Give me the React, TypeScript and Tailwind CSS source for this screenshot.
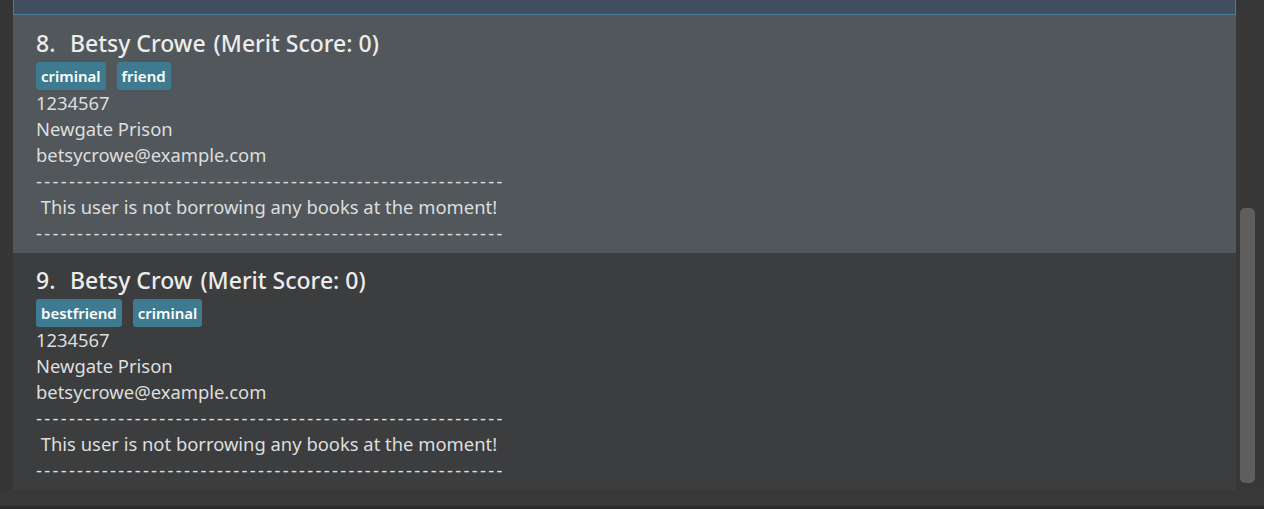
import React from "react";

const DASHES = "-".repeat(57);

type Person = { idx: number; name: string; tags: string[]; bg: string; pad: string };

const people: Person[] = [
  { idx: 8, name: "Betsy Crowe", tags: ["criminal", "friend"], bg: "bg-[#51575a]", pad: "pt-[14px] pb-[7px]" },
  { idx: 9, name: "Betsy Crow", tags: ["bestfriend", "criminal"], bg: "bg-[#3c3d3f]", pad: "pt-[13px] pb-[8px]" },
];

function Card({ p }: { p: Person }) {
  return (
    <div className={`${p.bg} ${p.pad} pl-[23px]`}>
      <div className="text-[23px] leading-[28px] font-medium text-[#ececec] flex">
        <span className="w-[34px]">{p.idx}.</span>
        <span>{p.name}</span>
        <span className="ml-[8px]">(Merit Score: 0)</span>
      </div>
      <div className="flex gap-[11px] mt-[5px]">
        {p.tags.map((t) => (
          <span
            key={t}
            className="bg-[#3e7b90] text-white text-[15px] font-semibold leading-[28px] h-[28px] px-[5px] rounded-[3px]"
          >
            {t}
          </span>
        ))}
      </div>
      <div className="text-[18.4px] leading-[26px] text-[#dedede]">
        <div>1234567</div>
        <div>Newgate Prison</div>
        <div>betsycrowe@example.com</div>
        <div className="whitespace-pre tracking-[2.3px]">{DASHES}</div>
        <div className="whitespace-pre"> This user is not borrowing any books at the moment!</div>
        <div className="whitespace-pre tracking-[2.3px]">{DASHES}</div>
      </div>
    </div>
  );
}

export default function App() {
  return (
    <div
      className="w-[1264px] h-[509px] bg-[#373737] overflow-hidden flex flex-col"
      style={{ fontFamily: '"Noto Sans", "Open Sans", sans-serif' }}
    >
      <div className="flex h-[490px]">
        <div className="w-[13px] bg-[#363636]" />
        <div className="w-[1223px] flex flex-col overflow-hidden">
          <div className="h-[15px] bg-[#414d60] border-l border-r border-b border-[#4a7f95] shrink-0" />
          {people.map((p) => (
            <Card key={p.idx} p={p} />
          ))}
        </div>
        <div className="flex-1 bg-[#373737] relative">
          <div className="absolute left-[4px] top-[208px] w-[15px] h-[275px] rounded-[5px] bg-[#5e5e5e]" />
        </div>
      </div>
      <div className="flex-1 bg-[#383838]" />
      <div className="h-[3px] bg-[#2c2c2c]" />
    </div>
  );
}
